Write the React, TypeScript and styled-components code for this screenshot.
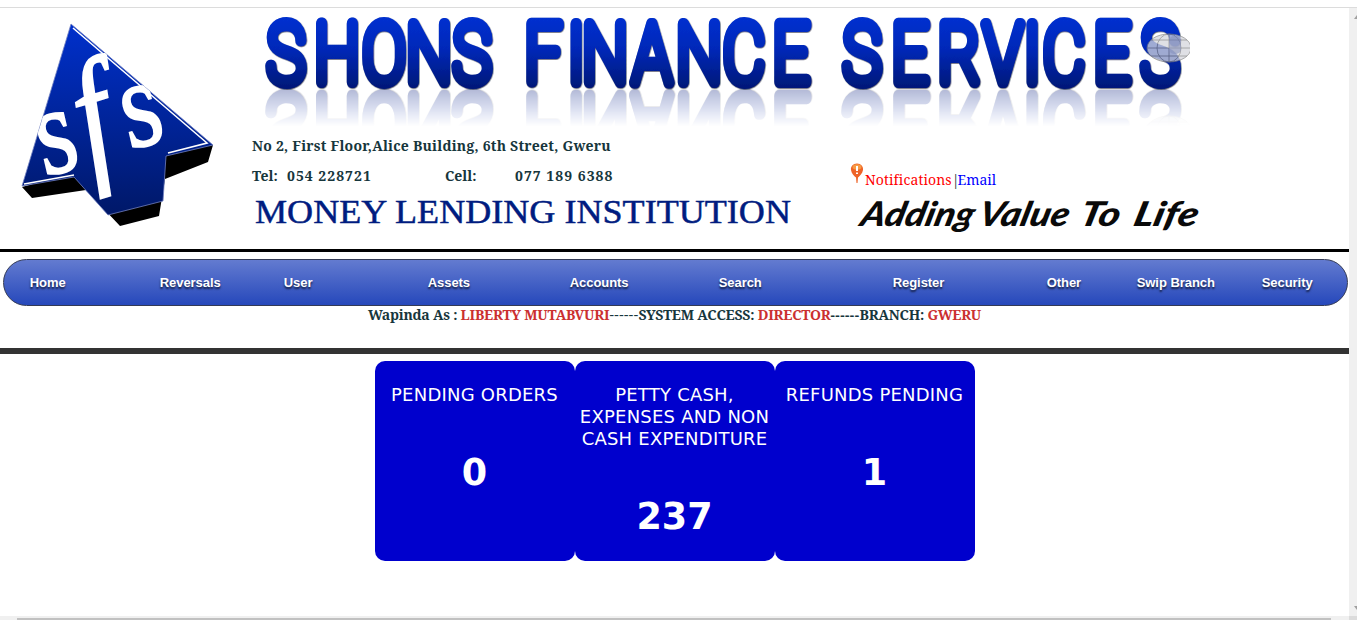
import React from "react";
import styled, { createGlobalStyle } from "styled-components";

const serif = '"Noto Serif", "Droid Serif", "DejaVu Serif Condensed", "DejaVu Serif", serif';

const GlobalStyle = createGlobalStyle`
  * { box-sizing: border-box; }
  body { margin: 0; background: #fff; overflow: hidden; }
`;

const Window = styled.div`
  display: grid;
  grid-template: 8px 608px 4px / 1349px 8px;
  width: 1357px;
  height: 620px;
`;

const TopEdge = styled.div`
  grid-column: 1 / -1;
  border-bottom: 1px solid #dcdcdc;
`;

const Page = styled.main`
  min-width: 0;
`;

const VerticalBar = styled.div`
  display: flex;
  flex-direction: column;
  justify-content: space-between;
  padding: 7px 0 6px 5px;
  background: #f0f0f0;
`;

const HorizontalBar = styled.div`
  padding: 2px 18px 0 17px;
  background: #f0f0f0;
`;

const Thumb = styled.div`
  height: 2px;
  background: #c1c1c1;
`;

const Corner = styled.div`
  background: #dcdcdc;
`;

const Header = styled.header`
  display: flex;
  height: 244px;
  border-bottom: 3px solid #000;
`;

const LogoSvg = styled.svg`
  flex: none;
  display: block;
  width: 252px;
  height: 240px;
`;

const HeaderBody = styled.div`
  width: 960px;
`;

const Banner = styled.div`
  height: 81px;
  -webkit-box-reflect: below 0 linear-gradient(transparent 54%, rgba(0, 0, 0, 0.3));
`;

const BannerSvg = styled.svg`
  display: block;
  overflow: visible;
`;

const HeaderRow = styled.div`
  display: flex;
  justify-content: space-between;
  padding: 47px 0 0;
`;

const Contact = styled.div`
  width: 560px;
  font: bold 14px/20px ${serif};
  color: #17363c;
`;

const Address = styled.div`
  letter-spacing: 0.22px;
`;

const Phones = styled.div`
  display: grid;
  grid-template-columns: 35px 158px 70px auto;
  margin-top: 10px;
`;

const Digits = styled.span`
  letter-spacing: 1px;
`;

const DrawnText = styled.svg`
  display: block;
  overflow: visible;
`;

const Aside = styled.div`
  width: 361px;
  padding-top: 27px;
`;

const Links = styled.div`
  display: flex;
  align-items: flex-end;
  height: 27px;
  font: 14px/20px ${serif};
  letter-spacing: -2px;
  color: #17363c;
`;

const HeaderLink = styled.a<{ $color: string; $spacing?: number }>`
  color: ${(p) => p.$color};
  letter-spacing: ${(p) => p.$spacing ?? 0}px;
`;

const Balloon = styled.svg`
  flex: none;
  width: 14px;
  height: 22px;
  margin: 0 1px 5px -1px;
`;

const Nav = styled.nav`
  display: grid;
  grid-template-columns: 130px 124px 144px 142px 149px 174px 154px 90px 125px auto;
  align-items: center;
  width: 1345px;
  height: 47px;
  margin: 7px 0 0 3px;
  padding-left: 25.7px;
  border: 1px solid #333a55;
  border-radius: 24px;
  background: linear-gradient(#637bd0, #2648bb);
`;

const NavItem = styled.a`
  font: bold 13px/20px "Liberation Sans", Arial, sans-serif;
  letter-spacing: -0.05px;
  color: #fff;
  white-space: nowrap;
  text-shadow: 0 2px 2px rgba(0, 0, 0, 0.7);
`;

const Status = styled.div`
  height: 48px;
  border-bottom: 6px solid #333;
  font: bold 14px/18px ${serif};
  letter-spacing: -0.23px;
  text-align: center;
  color: #17363c;
  white-space: pre;
`;

const Value = styled.span`
  color: #cb3030;
`;

const Dashes = styled.span<{ $light?: boolean }>`
  font-weight: ${(p) => (p.$light ? "normal" : "bold")};
  letter-spacing: 0.5px;
`;

const Cards = styled.section`
  display: flex;
  justify-content: center;
  margin-top: 7px;
`;

const Card = styled.article`
  width: 200px;
  height: 200px;
  padding: 23px 0 0;
  border-radius: 10px;
  background: #0000cd;
  color: #fff;
  font-family: Verdana, "DejaVu Sans", sans-serif;
  text-align: center;
`;

const CardTitle = styled.div`
  font-size: 18px;
  line-height: 22px;
  letter-spacing: 0.22px;
  white-space: pre-line;
`;

const CardCount = styled.div`
  margin-top: 45px;
  font-size: 36.500px;
  line-height: 44px;
  font-weight: bold;
`;

const NAV = ["Home", "Reversals", "User", "Assets", "Accounts", "Search", "Register", "Other", "Swip Branch", "Security"];

const CARDS = [
  { title: "PENDING ORDERS", count: "0" },
  { title: "PETTY CASH,\nEXPENSES AND NON\nCASH EXPENDITURE", count: "237" },
  { title: "REFUNDS PENDING", count: "1" },
];

// Letter centres of each banner word, in page pixels.
const BANNER_SCALE = 0.79;
const BANNER = [
  { word: "SHONS", at: [286, 337, 384, 429, 472] },
  { word: "FINANCE", at: [543, 576, 605, 652, 699, 744, 791] },
  { word: "SERVICES", at: [862, 910, 959, 1003, 1032, 1064, 1112, 1160] },
];

function Logo() {
  return (
    <LogoSvg viewBox="0 8 252 240">
      <defs>
        <linearGradient id="logoBlue" x1="0" y1="0" x2="0" y2="1">
          <stop offset="0" stopColor="#0030cc" />
          <stop offset="1" stopColor="#001868" />
        </linearGradient>
        <clipPath id="logoFace">
          <path d="M71 24 L213 145 L166 156 L163 201 L108 215 L74 177 L22 186 Z" />
        </clipPath>
      </defs>
      <path d="M22 187 L32 198 L86 190 L120 226 L159 216 L165 179 L208 162 L213 145 L160 150 L75 172 Z" fill="#000" />
      <path d="M71 24 L213 145 L166 156 L163 201 L108 215 L74 177 L22 186 Z" fill="url(#logoBlue)" stroke="#7180c0" strokeWidth="0.8" />
      <path d="M73 28 L207 143 L168 153" fill="none" stroke="#fff" strokeWidth="1.6" />
      <path d="M24 184 L74 175" fill="none" stroke="#fff" strokeWidth="1.6" />
      <g fill="#fff" stroke="#fff" fontFamily="Liberation Serif, serif" clipPath="url(#logoFace)">
        <text transform="translate(44 176) rotate(-13) scale(0.82 1)" fontSize="125" strokeWidth="2">s</text>
        <text transform="translate(90 168) rotate(-17) scale(0.82 1)" fontSize="150" fontStyle="italic" strokeWidth="2.5">f</text>
        <text transform="translate(129 149) rotate(-13) scale(0.82 1)" fontSize="125" strokeWidth="2">s</text>
      </g>
    </LogoSvg>
  );
}

function BannerTitle() {
  return (
    <Banner>
      <BannerSvg width="948" height="81" viewBox="252 8 948 81">
        <defs>
          <linearGradient id="bannerBlue" gradientUnits="userSpaceOnUse" x1="0" y1="17" x2="0" y2="88">
            <stop offset="0" stopColor="#0030d0" />
            <stop offset="0.45" stopColor="#0028b8" />
            <stop offset="1" stopColor="#001878" />
          </linearGradient>
          <filter id="bevel" x="-5%" y="-10%" width="110%" height="120%">
            <feDropShadow dx="0.6" dy="0.6" stdDeviation="0.7" floodColor="#101830" floodOpacity="0.9" />
          </filter>
        </defs>
        <text
          transform={`scale(${BANNER_SCALE} 1)`}
          y="82"
          fontFamily="Roboto, sans-serif"
          fontWeight="100"
          fontSize="81"
          textAnchor="middle"
          fill="url(#bannerBlue)"
          stroke="url(#bannerBlue)"
          strokeWidth="12"
          strokeLinejoin="round"
          filter="url(#bevel)"
        >
          {BANNER.map((b) => (
            <tspan key={b.word} x={b.at.map((v) => (v / BANNER_SCALE).toFixed(1)).join(" ")}>
              {b.word}
            </tspan>
          ))}
        </text>
        <svg x="1146" y="32" width="44" height="32" viewBox="1146 32 44 32">
          <g fill="none" stroke="#777" strokeWidth="0.8" opacity="0.75">
            <ellipse cx="1169" cy="48" rx="22" ry="14" fill="#d4d6dc" />
            <ellipse cx="1169" cy="48" rx="12" ry="14" />
            <path d="M1169 34 V62 M1147 48 H1191 M1151 40 H1187 M1151 56 H1187" />
          </g>
          <rect x="1169" y="36" width="12" height="18" rx="5" fill="#8993bd" opacity="0.6" />
        </svg>
      </BannerSvg>
    </Banner>
  );
}

export default function App() {
  return (
    <Window>
      <GlobalStyle />
      <TopEdge />
      <Page>
        <Header>
          <Logo />
          <HeaderBody>
            <BannerTitle />
            <HeaderRow>
              <Contact>
                <Address>No 2, First Floor,Alice Building, 6th Street, Gweru</Address>
                <Phones>
                  <span>Tel:</span>
                  <Digits>054 228721</Digits>
                  <span>Cell:</span>
                  <Digits>077 189 6388</Digits>
                </Phones>
                <DrawnText width="548" height="46" viewBox="252 186 548 46">
                  <text x="255" y="222.500" fontFamily="Liberation Serif, serif" fontWeight="400" fontSize="34.500" fill="#001c80" stroke="#001c80" strokeWidth="0.5" textLength="536" lengthAdjust="spacingAndGlyphs">
                    MONEY LENDING INSTITUTION
                  </text>
                </DrawnText>
              </Contact>
              <Aside>
                <Links>
                  <Balloon viewBox="0 0 14 22">
                    <path d="M7 0.5 C11 0.5 13.5 3.5 13 7 C12.5 10.5 9.500 13 8 14.500 L7.500 20 H6.500 L6 14.500 C4 13 1.500 10.500 1 7 C0.500 3.500 3 0.500 7 0.500Z" fill="#ee6428" />
                    <ellipse cx="7" cy="4" rx="4.500" ry="2.800" fill="#f79b45" />
                    <path d="M7 3 V8 M7 9.500 V11" stroke="#fff" strokeWidth="2" />
                  </Balloon>
                  <HeaderLink $color="#f00" $spacing={0.1}>Notifications</HeaderLink>|<HeaderLink $color="#00f" $spacing={-0.05}>Email</HeaderLink>
                </Links>
                <DrawnText width="350" height="45" viewBox="851 190 350 45">
                  <text transform="translate(859 226) skewX(-14)" fontFamily="Lato, sans-serif" fontStyle="italic" fontWeight="900" fontSize="34" fill="#0a0a0a">
                    <tspan x="0" textLength="113" lengthAdjust="spacingAndGlyphs">Adding</tspan>{" "}
                    <tspan x="118" textLength="90" lengthAdjust="spacingAndGlyphs">Value</tspan>{" "}
                    <tspan x="219" textLength="40" lengthAdjust="spacingAndGlyphs">To</tspan>{" "}
                    <tspan x="273" textLength="64" lengthAdjust="spacingAndGlyphs">Life</tspan>
                  </text>
                </DrawnText>
              </Aside>
            </HeaderRow>
          </HeaderBody>
        </Header>
        <Nav>
          {NAV.map((label) => (
            <NavItem key={label}>{label}</NavItem>
          ))}
        </Nav>
        <Status>
          Wapinda As : <Value>LIBERTY MUTABVURI</Value>
          <Dashes $light>------</Dashes>SYSTEM ACCESS: <Value>DIRECTOR</Value>
          <Dashes>------</Dashes>BRANCH: <Value>GWERU</Value>
        </Status>
        <Cards>
          {CARDS.map((c) => (
            <Card key={c.title}>
              <CardTitle>{c.title}</CardTitle>
              <CardCount>{c.count}</CardCount>
            </Card>
          ))}
        </Cards>
      </Page>
      <VerticalBar>
        <svg width="3" height="4" viewBox="0 0 3 4">
          <path d="M0 4 L3 0 V4Z" fill="#a0a0a0" />
        </svg>
        <svg width="3" height="4" viewBox="0 0 3 4">
          <path d="M0 0 H3 V4Z" fill="#a0a0a0" />
        </svg>
      </VerticalBar>
      <HorizontalBar>
        <Thumb />
      </HorizontalBar>
      <Corner />
    </Window>
  );
}
